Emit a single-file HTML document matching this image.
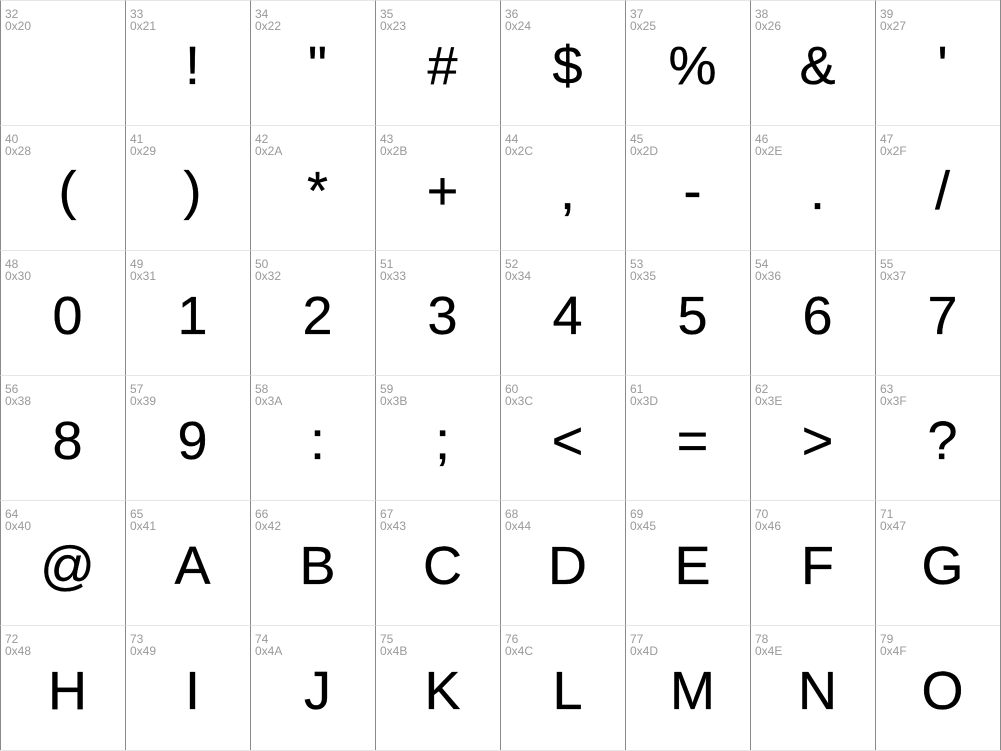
<!DOCTYPE html>
<html><head><style>
body{margin:0;width:1001px;height:751px;background:#fff;position:relative;overflow:hidden;font-family:"Liberation Sans",sans-serif}
.c{position:absolute;width:125px;height:125px;box-sizing:border-box;border-left:1px solid #8a8a8a;border-top:1px solid #e6e6e6}
.l{position:absolute;left:4px;top:7px;font-size:12px;line-height:12px;color:#999}
.g{position:absolute;left:8px;width:117px;top:37px;text-align:center;font-size:54px;line-height:56px;color:#000;-webkit-text-stroke:0.3px #000}
</style></head><body>
<div id="grid"></div>
<div style="position:absolute;left:1000px;top:0;width:1px;height:751px;background:#8a8a8a"></div>
<div style="position:absolute;left:0;top:750px;width:1001px;height:1px;background:#e6e6e6"></div>
<script>
var h='';
for(var i=0;i<48;i++){var code=32+i,r=Math.floor(i/8),c=i%8;
var ch=String.fromCharCode(code);
ch=ch.replace('&','&amp;').replace('<','&lt;').replace('>','&gt;');
if(code==32)ch='';
h+='<div class="c" style="left:'+(c*125)+'px;top:'+(r*125)+'px"><div class="l">'+code+'<br>0x'+code.toString(16).toUpperCase()+'</div><div class="g">'+ch+'</div></div>';}
document.getElementById('grid').outerHTML=h;
</script>
</body></html>
